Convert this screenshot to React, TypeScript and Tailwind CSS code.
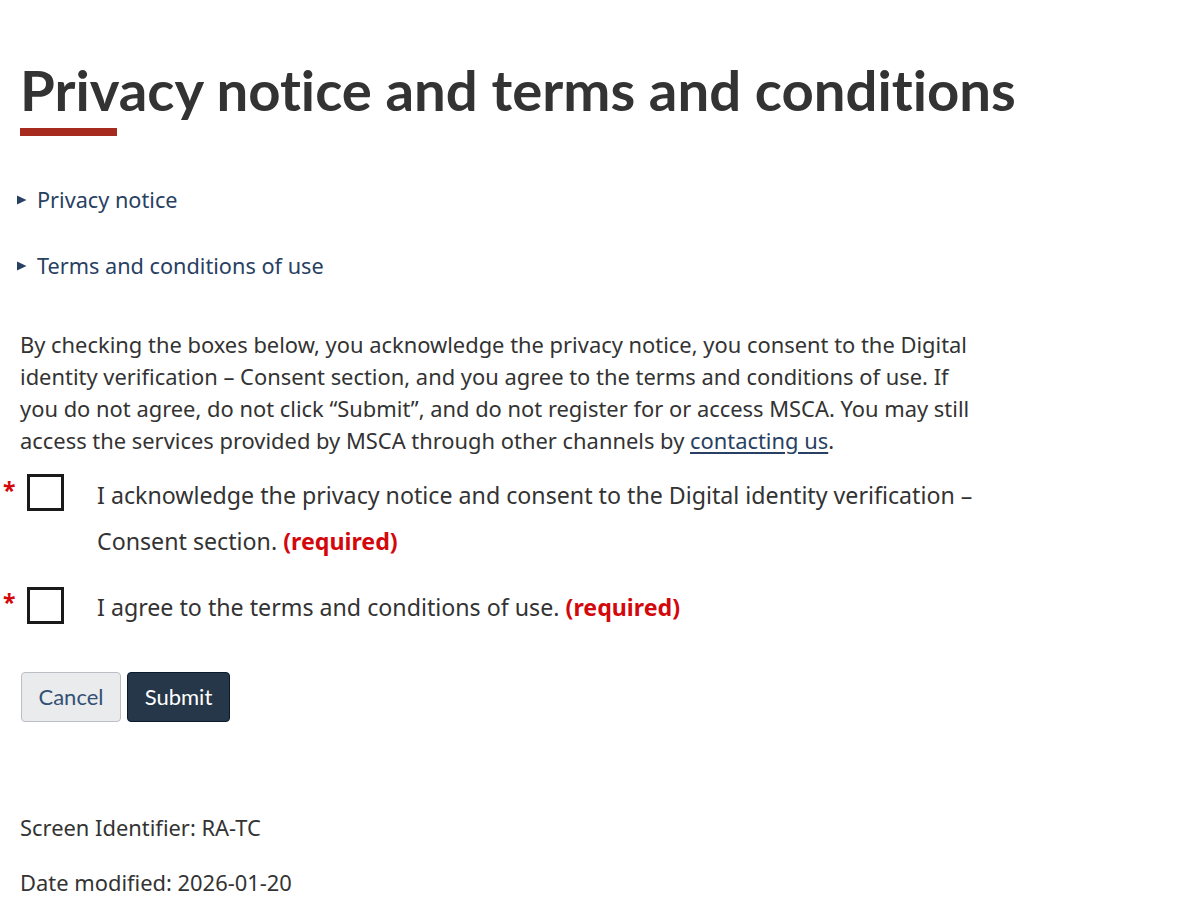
import React from "react";

const lato = { fontFamily: "Lato, 'Noto Sans', sans-serif" };

function Summary({ label }: { label: string }) {
  return (
    <details>
      <summary className="-ml-[3px] flex list-none cursor-pointer items-center gap-[10px] text-[21.7px] text-[#284162] [&::-webkit-details-marker]:hidden">
        <svg width="10" height="10" viewBox="0 0 10 10" className="shrink-0">
          <path d="M0 0.5 L9.5 5 L0 9.5 Z" fill="#284162" />
        </svg>
        <span>{label}</span>
      </summary>
    </details>
  );
}

function CheckRow({ children, boxTop }: { children: React.ReactNode; boxTop: string }) {
  return (
    <div className="flex items-start">
      <span className="w-[27px] shrink-0 pl-[3px] pt-[7px] text-[23px] font-bold leading-none text-[#d3080c]">*</span>
      <span className={`${boxTop} h-[37px] w-[37px] shrink-0 border-[3px] border-[#1a1a1a] bg-white`} />
      <p className="ml-[33px] text-[23.2px] leading-[46px]">{children}</p>
    </div>
  );
}

export default function App() {
  return (
    <div
      className="min-h-screen bg-white text-[21.9px] text-[#333333] [font-variant-ligatures:none]"
      style={{ fontFamily: "'Noto Sans', sans-serif" }}
    >
      <main className="pl-[20px] pt-[59px]">
        <h1 className="whitespace-nowrap text-[56.3px] font-bold leading-[1.1] text-[#333333]" style={lato}>
          Privacy notice and terms and conditions
        </h1>
        <div className="mt-[7px] h-[8px] w-[97px] bg-[#a62a1e]" />

        <div className="mt-[48px] flex flex-col gap-[34px] leading-[32px]">
          <Summary label="Privacy notice" />
          <Summary label="Terms and conditions of use" />
        </div>

        <div className="w-[962px]">
          <p className="mt-[47px] leading-[32px]">
            By checking the boxes below, you acknowledge the privacy notice, you consent to the Digital identity
            verification – Consent section, and you agree to the terms and conditions of use. If you do not agree, do
            not click “Submit”, and do not register for or access MSCA. You may still access the services provided by
            MSCA through other channels by{" "}
            <a href="#" className="text-[#284162] underline underline-offset-[3px]">
              contacting us
            </a>
            .
          </p>

          <div className="-ml-[20px] mt-[15px] flex flex-col gap-[20px]">
            <CheckRow boxTop="mt-[2px]">
              I acknowledge the privacy notice and consent to the Digital identity verification – Consent section.{" "}
              <strong className="font-bold text-[#d3080c]">(required)</strong>
            </CheckRow>
            <CheckRow boxTop="mt-[3px]">
              I agree to the terms and conditions of use.{" "}
              <strong className="font-bold text-[#d3080c]">(required)</strong>
            </CheckRow>
          </div>
        </div>

        <div className="mt-[42px] flex gap-[6px] pl-[1px]" style={lato}>
          <button className="h-[50px] w-[100px] rounded-[4px] border border-[#bbbfc5] bg-[#eaebed] text-[22px] text-[#335075]">
            Cancel
          </button>
          <button className="h-[50px] w-[103px] rounded-[4px] border border-[#091c2d] bg-[#26374a] text-[22px] text-white">
            Submit
          </button>
        </div>

        <div className="mt-[90px] flex flex-col gap-[23px] leading-[32px]">
          <p>Screen Identifier: RA-TC</p>
          <p>Date modified: 2026-01-20</p>
        </div>
      </main>
    </div>
  );
}
